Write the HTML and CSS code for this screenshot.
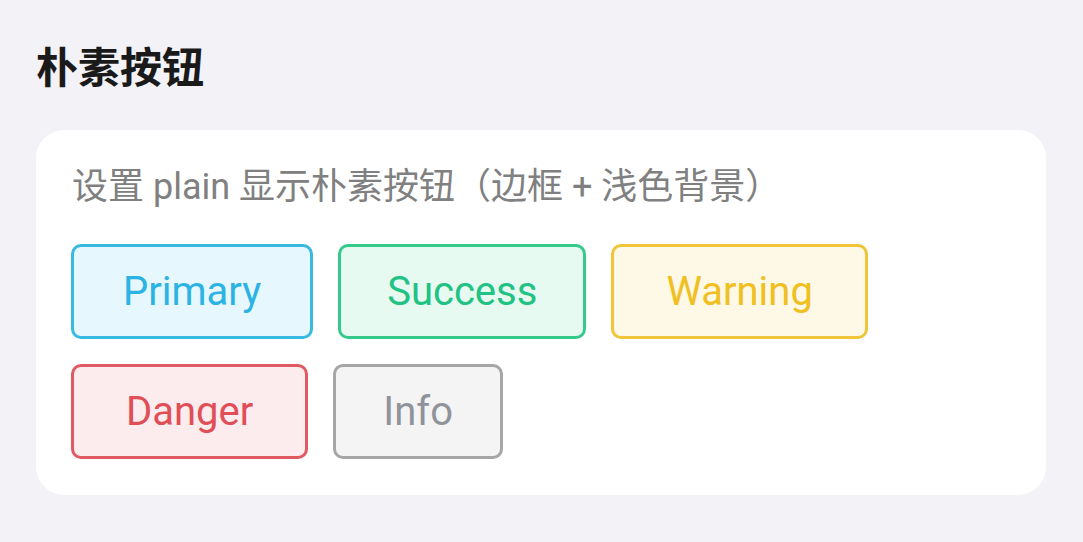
FILE: index.html
```html
<!DOCTYPE html>
<html lang="zh-CN">
<head>
  <meta charset="UTF-8">
  <meta name="viewport" content="width=device-width, initial-scale=1.0">
  <title>朴素按钮</title>
  <link rel="stylesheet" href="styles.css">
</head>
<body>
  <!-- 标题 -->
  <h2 class="section-title">朴素按钮</h2>

  <!-- 示例卡片 -->
  <div class="card">
    <p class="desc">设置 plain 显示朴素按钮（边框 + 浅色背景）</p>
    <div class="btn-group">
      <button class="btn btn-primary">Primary</button>
      <button class="btn btn-success">Success</button>
      <button class="btn btn-warning">Warning</button>
      <button class="btn btn-danger">Danger</button>
      <button class="btn btn-info">Info</button>
    </div>
  </div>
</body>
</html>
```

FILE: styles.css
```css
body {
  margin: 0;
  padding: 44px 37px 0 36px;
  background-color: #f2f2f7;
  font-family: 'Roboto', 'Noto Sans CJK SC', sans-serif;
  height: 542px;
  box-sizing: border-box;
  overflow: hidden;
}
.section-title {
  margin: 0 0 36px;
  font-size: 42px;
  line-height: 50px;
  font-weight: bold;
  color: #1a1a1a;
}
.card {
  background-color: #fff;
  border-radius: 28px;
  padding: 36px 36px 36px 35px;
}
.desc {
  margin: 0 0 35px 1px;
  font-size: 36px;
  line-height: 43px;
  color: #808080;
}
.btn-group {
  display: flex;
  flex-wrap: wrap;
  gap: 25px;
}
.btn {
  font-family: inherit;
  font-size: 40px;
  line-height: 47px;
  padding: 21px 49px;
  border: 3px solid;
  border-radius: 10px;
  cursor: pointer;
}
.btn-primary {
  color: #2bb3e3;
  border-color: #38b9e2;
  background-color: #e6f7fe;
}
.btn-success {
  padding: 21px 46px;
  color: #21c283;
  border-color: #35c98c;
  background-color: #e6faf1;
}
.btn-warning {
  padding: 21px 52px;
  color: #f0bf22;
  border-color: #f0c53a;
  background-color: #fef8e6;
}
.btn-danger {
  padding: 21px 52px;
  color: #e04e58;
  border-color: #e05a64;
  background-color: #fdeced;
}
.btn-info {
  padding: 21px 47px;
  color: #909399;
  border-color: #a6a6a6;
  background-color: #f4f4f5;
}
```
